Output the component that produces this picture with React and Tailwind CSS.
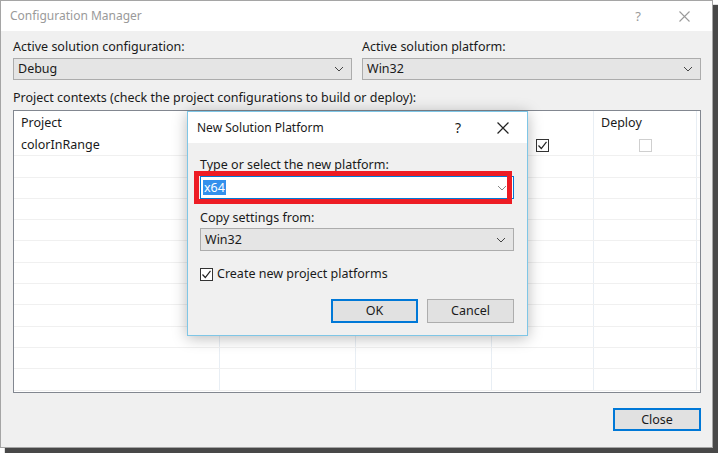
import React from "react";

const Chevron = ({ color = "#444" }) => (
  <svg width="10" height="6" viewBox="0 0 10 6" className="shrink-0">
    <path d="M1 1 L5 5 L9 1" fill="none" stroke={color} strokeWidth="1" />
  </svg>
);

const XIcon = ({ color = "#333", size = 11 }) => (
  <svg width={size} height={size} viewBox="0 0 11 11">
    <path d="M0.5 0.5 L10.5 10.5 M10.5 0.5 L0.5 10.5" fill="none" stroke={color} strokeWidth="1.1" />
  </svg>
);

const CheckBox = ({ checked, light }) => (
  <div
    className={`w-[13px] h-[13px] border bg-white flex items-center justify-center ${
      light ? "border-[#cfcfcf]" : "border-[#333]"
    }`}
  >
    {checked && (
      <svg width="11" height="11" viewBox="0 0 11 11">
        <path d="M1.5 5.5 L4.3 8.5 L9.5 1.8" fill="none" stroke="#222" strokeWidth="1.2" />
      </svg>
    )}
  </div>
);

const Select = ({ value, className = "" }) => (
  <div
    className={`flex items-center justify-between bg-[#e5e5e5] border border-[#acacac] pl-[4px] pr-[7px] ${className}`}
  >
    <span>{value}</span>
    <Chevron />
  </div>
);

const cols = [206, 136, 136, 102, 103];

const Row = ({ cells, header }) => (
  <div
    className={`flex shrink-0 ${header ? "h-[24px]" : "h-[21.3px] border-b border-[#f0f0f0]"}`}
  >
    {cols.map((w, i) => (
      <div
        key={i}
        style={{ width: w }}
        className={`shrink-0 flex items-center h-full border-r border-[#e8eef4] ${
          cells && cells[i] && typeof cells[i] !== "string" ? "justify-center" : "pl-[7px]"
        }`}
      >
        {cells ? cells[i] : null}
      </div>
    ))}
  </div>
);

export default function App() {
  const rows = Array.from({ length: 11 });
  return (
    <div
      className="relative w-[718px] h-[453px] bg-white overflow-hidden text-[12.5px] text-[#1a1a1a] leading-[16px]"
      style={{ fontFamily: '"Noto Sans", "Open Sans", sans-serif' }}
    >
      {/* Main window */}
      <div className="w-[713px] h-[448px] border border-[#a5a5a5] flex flex-col bg-[#f0f0f0] shadow-[5px_5px_1px_rgba(40,40,40,0.85)]">
        <div className="h-[30px] bg-white flex items-center pl-[9px] pr-[22px] shrink-0">
          <span className="text-[#9a9a9a] text-[12px] flex-1">Configuration Manager</span>
          <span className="text-[#9a9a9a] text-[13px] mr-[38px]">?</span>
          <XIcon color="#9a9a9a" />
        </div>
        <div className="flex-1 flex flex-col pl-[12px] pr-[11px] pt-[8px]">
          <div className="grid grid-cols-2 gap-[10px]">
            <div className="flex flex-col gap-[3px]">
              <span>Active solution configuration:</span>
              <Select value="Debug" className="h-[22px]" />
            </div>
            <div className="flex flex-col gap-[3px]">
              <span>Active solution platform:</span>
              <Select value="Win32" className="h-[22px]" />
            </div>
          </div>
          <div className="mt-[10px]">
            Project contexts (check the project configurations to build or deploy):
          </div>
          <div className="mt-[4px] h-[283px] border border-[#828790] bg-white flex flex-col overflow-hidden">
            <Row header cells={["Project", "", "", "", "Deploy"]} />
            <Row
              cells={[
                "colorInRange",
                "",
                "",
                <CheckBox checked key="b" />,
                <CheckBox light key="d" />,
              ]}
            />
            {rows.map((_, i) => (
              <Row key={i} />
            ))}
          </div>
          <div className="flex justify-end mt-[15px]">
            <button className="w-[88px] h-[23px] border-2 border-[#0078d7] bg-[#e1e1e1] flex items-center justify-center">
              Close
            </button>
          </div>
        </div>
      </div>

      {/* Dialog */}
      <div className="absolute left-[187px] top-[111px] w-[341px] h-[225px] border border-[#7fc6e6] bg-[#f0f0f0] flex flex-col shadow-[0_2px_14px_rgba(0,0,0,0.28)]">
        <div className="h-[31px] bg-white flex items-center pl-[9px] pr-[18px] shrink-0">
          <span className="flex-1 text-[12px]">New Solution Platform</span>
          <span className="text-[14px] mr-[36px]">?</span>
          <XIcon color="#222" size={12} />
        </div>
        <div className="flex flex-col pl-[12px] pr-[13px] pt-[14px]">
          <span>Type or select the new platform:</span>
          <div className="relative mt-[3px] h-[23px] bg-white border border-[#0078d7] flex items-center justify-between pl-[2px] pr-[6px]">
            <span className="bg-[#3390ec] text-white px-[1px] leading-[15px]">x64</span>
            <Chevron color="#888" />
            <div className="absolute left-[-7px] top-[-6px] w-[318px] h-[33px] border-[5px] border-[#ed1c24]" />
          </div>
          <span className="mt-[11px]">Copy settings from:</span>
          <Select value="Win32" className="mt-[2px] h-[23px]" />
          <div className="flex items-center gap-[4px] mt-[15px]">
            <CheckBox checked />
            <span>Create new project platforms</span>
          </div>
          <div className="flex justify-end gap-[9px] mt-[17px]">
            <button className="w-[87px] h-[24px] border-2 border-[#0078d7] bg-[#e1e1e1] flex items-center justify-center">
              OK
            </button>
            <button className="w-[87px] h-[24px] border border-[#adadad] bg-[#e1e1e1] flex items-center justify-center">
              Cancel
            </button>
          </div>
        </div>
      </div>
    </div>
  );
}
